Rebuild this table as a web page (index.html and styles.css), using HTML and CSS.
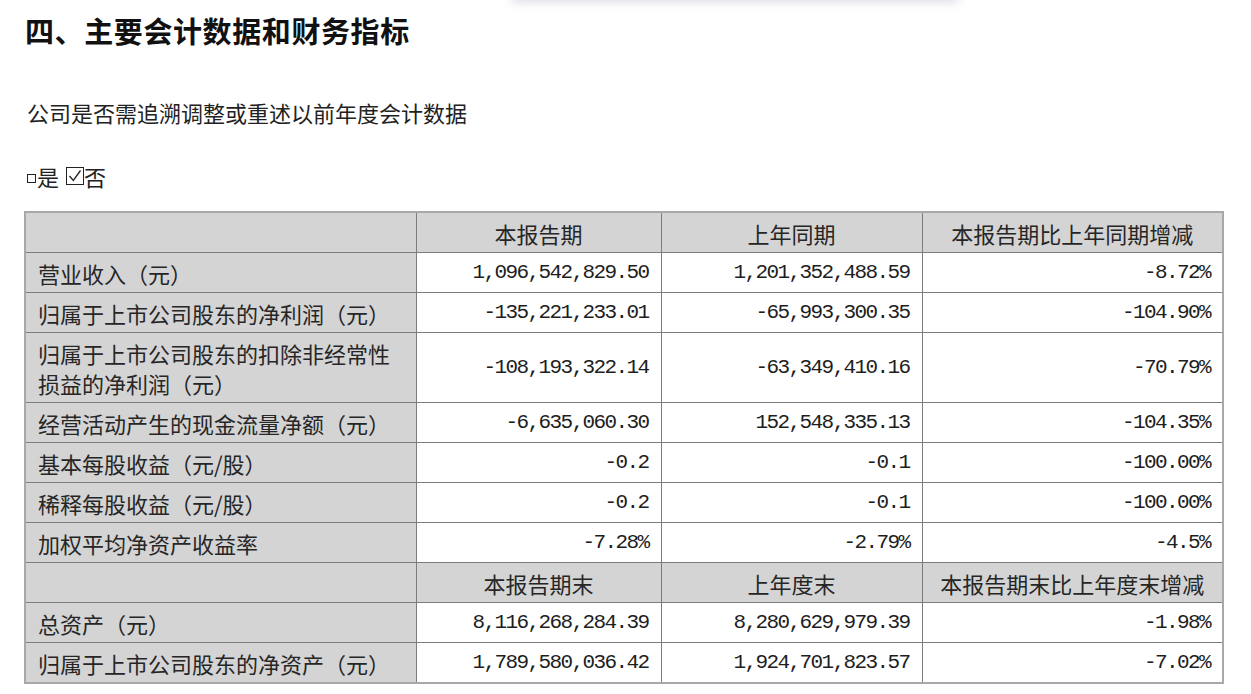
FILE: index.html
```html
<!DOCTYPE html>
<html lang="zh-CN">
<head>
<meta charset="utf-8">
<link rel="stylesheet" href="styles.css">
</head>
<body>
<div class="float-shadow"></div>
<main class="page">
  <h1 class="title">四、主要会计数据和财务指标</h1>
  <p class="question">公司是否需追溯调整或重述以前年度会计数据</p>
  <p class="choices"><span class="box-small"></span>是 <svg class="box-check" viewBox="0 0 18 18" width="18" height="18"><rect x="0.5" y="0.5" width="17" height="17" fill="none" stroke="#222" stroke-width="1"/><path d="M3.5 9 L7.3 13.5 L14.5 3.5" fill="none" stroke="#222" stroke-width="1.3"/></svg>否</p>
  <table class="fin">
    <colgroup>
      <col class="c1"><col class="c2"><col class="c3"><col class="c4">
    </colgroup>
    <tr class="head"><th></th><th>本报告期</th><th>上年同期</th><th>本报告期比上年同期增减</th></tr>
    <tr><th>营业收入（元）</th><td>1,096,542,829.50</td><td>1,201,352,488.59</td><td>-8.72%</td></tr>
    <tr><th>归属于上市公司股东的净利润（元）</th><td>-135,221,233.01</td><td>-65,993,300.35</td><td>-104.90%</td></tr>
    <tr class="tall"><th><span class="line">归属于上市公司股东的扣除非经常性</span><span class="line">损益的净利润（元）</span></th><td>-108,193,322.14</td><td>-63,349,410.16</td><td>-70.79%</td></tr>
    <tr><th>经营活动产生的现金流量净额（元）</th><td>-6,635,060.30</td><td>152,548,335.13</td><td>-104.35%</td></tr>
    <tr><th>基本每股收益（元/股）</th><td>-0.2</td><td>-0.1</td><td>-100.00%</td></tr>
    <tr><th>稀释每股收益（元/股）</th><td>-0.2</td><td>-0.1</td><td>-100.00%</td></tr>
    <tr><th>加权平均净资产收益率</th><td>-7.28%</td><td>-2.79%</td><td>-4.5%</td></tr>
    <tr class="head"><th></th><th>本报告期末</th><th>上年度末</th><th>本报告期末比上年度末增减</th></tr>
    <tr><th>总资产（元）</th><td>8,116,268,284.39</td><td>8,280,629,979.39</td><td>-1.98%</td></tr>
    <tr><th>归属于上市公司股东的净资产（元）</th><td>1,789,580,036.42</td><td>1,924,701,823.57</td><td>-7.02%</td></tr>
  </table>
</main>
</body>
</html>
```

FILE: styles.css
```css
html, body {
  margin: 0;
  padding: 0;
  background: #ffffff;
}
body {
  font-family: "Noto Sans CJK SC", "Liberation Sans", sans-serif;
  color: #1a1a1a;
  overflow: hidden;
}
.float-shadow {
  position: absolute;
  top: -30px;
  left: 512px;
  width: 446px;
  height: 30px;
  background: #fff;
  box-shadow: 0 2px 9px rgba(90, 95, 140, 0.22);
}
.page {
  padding: 10px 0 0 25px;
}
.title {
  margin: 0;
  font-size: 29px;
  line-height: 40px;
  font-weight: 700;
  color: #111;
  letter-spacing: 0.6px;
}
.question {
  margin: 47px 0 0 2px;
  font-size: 22px;
  line-height: 30px;
  font-weight: 400;
  color: #222;
}
.choices {
  margin: 34px 0 0 2px;
  font-size: 22px;
  line-height: 30px;
  color: #222;
  display: flex;
  align-items: center;
}
.box-small {
  display: inline-block;
  width: 7px;
  height: 7px;
  border: 1px solid #222;
  margin: 5px 1px 0 0;
}
.box-check {
  margin: 0 0 0 7px;
}
.fin {
  margin-top: 20px;
  margin-left: -1px;
  border-collapse: collapse;
  width: 1198px;
  table-layout: fixed;
  border: 2px solid #a8a8a8;
}
.c1 { width: 391px; }
.c2 { width: 245px; }
.c3 { width: 261px; }
.c4 { width: 301px; }
.fin th, .fin td {
  border: 1px solid #7c7c7c;
  height: 39px;
  padding: 0 12px;
  font-size: 22px;
  line-height: 28px;
  color: #262626;
  font-weight: 400;
}
.fin th {
  background: #d4d4d4;
  text-align: left;
}
.fin tr.head th {
  text-align: center;
}
.fin tr.tall th, .fin tr.tall td {
  height: 69px;
}
.line {
  display: block;
  line-height: 30px;
}
.fin td {
  text-align: right;
  background: #fff;
  font-family: "Liberation Mono", "Noto Sans CJK SC", monospace;
  font-size: 21px;
  letter-spacing: -1.6px;
  color: #1e1e1e;
}
```
